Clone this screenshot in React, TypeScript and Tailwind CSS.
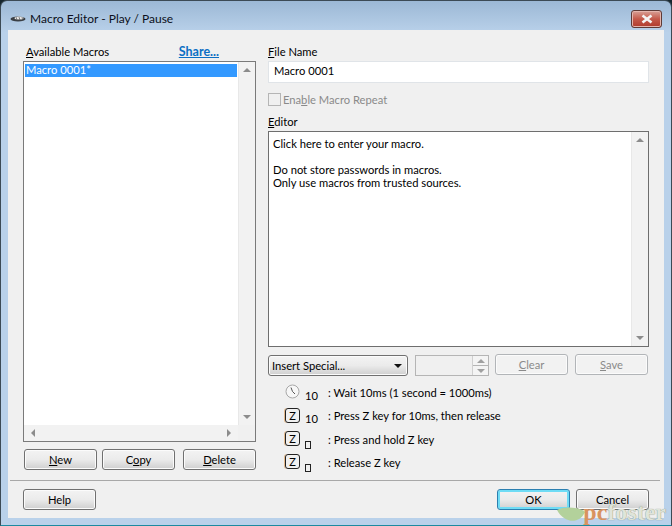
import type { ReactNode } from "react";

const btn = "flex items-center justify-center rounded-[3px] border border-[#707070] bg-gradient-to-b from-[#f3f3f3] via-[#ebebeb] to-[#cfcfcf] shadow-[inset_0_0_0_1px_#fbfbfb] text-black";
const btnOff = "flex items-center justify-center rounded-[3px] border border-[#b2b5b8] bg-[#f2f2f2] text-[#8a8a8a] shadow-[inset_0_0_0_1px_#fbfbfb]";

function Tri({ dir, color = "#8c8c8c" }: { dir: "up" | "down" | "left" | "right"; color?: string }) {
  const pts = {
    up: "0,4 4,0 8,4",
    down: "0,0 8,0 4,4",
    left: "4,0 4,8 0,4",
    right: "0,0 4,4 0,8",
  }[dir];
  const box = dir === "up" || dir === "down" ? "0 0 8 4" : "0 0 4 8";
  const w = dir === "up" || dir === "down" ? 8 : 4;
  const h = dir === "up" || dir === "down" ? 4 : 8;
  return (
    <svg width={w} height={h} viewBox={box}>
      <polygon points={pts} fill={color} />
    </svg>
  );
}

function VScroll() {
  return (
    <div className="w-[17px] shrink-0 bg-[#f2f2f2] flex flex-col justify-between items-center py-[6px] border-l border-[#e8e8e8]">
      <Tri dir="up" />
      <Tri dir="down" />
    </div>
  );
}

function KeyIcon() {
  return (
    <div className="w-[15px] h-[15px] rounded-[3px] border border-[#222] flex items-center justify-center text-[11px] leading-none shadow-[-1px_0_0_#e4b98c]">
      Z
    </div>
  );
}

function Clock() {
  return (
    <svg width="15" height="15" viewBox="0 0 15 15" fill="none">
      <circle cx="7.5" cy="7.5" r="6.5" stroke="#a8a8a8" fill="#f7f7f7" />
      <path d="M6 3.5 L7.5 7.5 L10 10" stroke="#555" />
    </svg>
  );
}

function Tofu() {
  return <div className="w-[6px] h-[8px] border border-[#222]" />;
}

function LegendRow({ icon, sub, text, h }: { icon: ReactNode; sub: ReactNode; text: string; h: string }) {
  return (
    <div className={`flex items-center ${h}`}>
      <div className="w-[15px] ml-[17px] mb-[2px] flex justify-center">{icon}</div>
      <div className="w-[28px] pl-[5px] pt-[6px] leading-[14px]">{sub}</div>
      <div className="whitespace-nowrap">{text}</div>
    </div>
  );
}

export default function App() {
  return (
    <div className="w-[672px] h-[526px] overflow-hidden bg-[#16262e] font-['Lato',sans-serif] text-[11.2px] leading-[14px] text-black">
      <div className="relative w-full h-full flex flex-col rounded-t-[7px] border border-[#3c4a55] border-b-[#1c8aa0] bg-gradient-to-b from-[#9cb8d5] from-0% to-[#b9d1ea] to-[6%]">
        {/* Title bar */}
        <div className="h-[29px] shrink-0 flex items-center pl-[9px] pr-[9px]">
          <svg width="16" height="8" viewBox="0 0 16 8" className="mt-[7px]">
            <ellipse cx="8" cy="4" rx="7.5" ry="2.6" fill="#3a3f45" />
            <ellipse cx="9" cy="3" rx="4.5" ry="1.6" fill="#e8e8e8" />
            <path d="M6 2 L7 5 M9 2 L10 5 M12 2 L12.5 4.5" stroke="#555" strokeWidth="0.7" />
          </svg>
          <div className="ml-[4px] mt-[7px] text-[12px] text-[#0c1020]">Macro Editor - Play / Pause</div>
          <div className="ml-auto mt-[7px] w-[31px] h-[18px] rounded-[3px] border border-[#5e3a36] bg-gradient-to-b from-[#d7a097] via-[#c4594a] to-[#b03a2c] flex items-center justify-center shadow-[inset_0_0_0_1px_#e4b5ad]">
            <svg width="14" height="10" viewBox="0 0 14 10">
              <path d="M2.5 1.5 L11.5 8.5 M11.5 1.5 L2.5 8.5" stroke="#f4f4f4" strokeWidth="2.6" />
            </svg>
          </div>
        </div>

        {/* Dialog body */}
        <div className="flex-1 mx-[7px] mb-[7px] bg-[#f0f0f0] flex flex-col min-h-0">
          <div className="h-[450px] shrink-0 flex gap-[12px] pl-[15px] pr-[15px] pt-[15px]">
            {/* Available macros */}
            <div className="w-[233px] shrink-0 flex flex-col">
              <div className="h-[16px] flex justify-between pl-[3px] pr-[37px]">
                <span><u>A</u>vailable Macros</span>
                <span className="font-bold text-[12.5px] text-[#0b6fc4] underline">Share...</span>
              </div>
              <div className="h-[381px] border border-[#7a7a7a] bg-white flex flex-col">
                <div className="flex-1 flex min-h-0">
                  <div className="flex-1 p-[1px]">
                    <div className="h-[13px] mt-[1px] bg-[#3399ff] text-white pl-[1px] leading-[12px]">Macro 0001*</div>
                  </div>
                  <VScroll />
                </div>
                <div className="h-[16px] shrink-0 flex">
                  <div className="flex-1 bg-[#f2f2f2] flex justify-between items-center px-[7px]">
                    <Tri dir="left" />
                    <Tri dir="right" />
                  </div>
                  <div className="w-[17px] bg-[#f0f0f0]" />
                </div>
              </div>
              <div className="mt-[7px] h-[21px] flex pl-[1px]">
                <div className={`${btn} w-[73px]`}><span><u>N</u>ew</span></div>
                <div className={`${btn} w-[73px] ml-[5px]`}><span>C<u>o</u>py</span></div>
                <div className={`${btn} w-[73px] ml-[8px]`}><span><u>D</u>elete</span></div>
              </div>
            </div>

            {/* Editor side */}
            <div className="w-[381px] shrink-0 flex flex-col">
              <div className="h-[16px]"><u>F</u>ile Name</div>
              <div className="h-[22px] border border-[#e0e4e8] bg-white pl-[5px] pb-[2px] flex items-center">Macro 0001</div>
              <div className="mt-[10px] h-[13px] flex items-center">
                <div className="w-[13px] h-[13px] border border-[#b5b5b5] bg-[#f0f0f0]" />
                <span className="ml-[2px] text-[#8a8a8a]">Ena<u>b</u>le Macro Repeat</span>
              </div>
              <div className="mt-[9px] h-[16px]"><u>E</u>ditor</div>
              <div className="h-[216px] border border-[#6e6e6e] bg-white flex">
                <div className="flex-1 pl-[4px] pt-[5px] leading-[13px]">
                  <div>Click here to enter your macro.</div>
                  <div className="mt-[13px]">Do not store passwords in macros.</div>
                  <div>Only use macros from trusted sources.</div>
                </div>
                <VScroll />
              </div>
              <div className="mt-[7px] h-[22px] flex">
                <div className={`${btn} w-[140px] h-[21px] mt-[1px] justify-between! pl-[3px] pr-[5px]`}>
                  <span>Insert Special...</span>
                  <Tri dir="down" color="#111" />
                </div>
                <div className="w-[74px] h-[21px] mt-[1px] ml-[7px] border border-[#b5b5b5] bg-[#f0f0f0] flex justify-end">
                  <div className="w-[16px] flex flex-col border-l border-[#d0d0d0]">
                    <div className="flex-1 flex items-center justify-center border-b border-[#b5b5b5] bg-[#f4f4f4]"><Tri dir="up" color="#a0a0a0" /></div>
                    <div className="flex-1 flex items-center justify-center bg-[#f4f4f4]"><Tri dir="down" color="#a0a0a0" /></div>
                  </div>
                </div>
                <div className={`${btnOff} w-[73px] h-[21px] ml-[6px]`}><span><u>C</u>lear</span></div>
                <div className={`${btnOff} w-[73px] h-[21px] ml-[7px]`}><span><u>S</u>ave</span></div>
              </div>
              <div className="mt-[5px] flex flex-col">
                <LegendRow h="h-[23px]" icon={<Clock />} sub="10" text=": Wait 10ms (1 second = 1000ms)" />
                <LegendRow h="h-[24px]" icon={<KeyIcon />} sub="10" text=": Press Z key for 10ms, then release" />
                <LegendRow h="h-[23px]" icon={<KeyIcon />} sub={<div className="mt-[4px]"><Tofu /></div>} text=": Press and hold Z key" />
                <LegendRow h="h-[23px]" icon={<KeyIcon />} sub={<div className="mt-[4px]"><Tofu /></div>} text=": Release Z key" />
              </div>
            </div>
          </div>

          {/* Footer */}
          <div className="mx-[2px] mr-[4px] border-t border-[#a8a8a8]" />
          <div className="flex-1 flex items-start pl-[15px] pr-[15px] pt-[8px]">
            <div className={`${btn} w-[73px] h-[21px]`}>Help</div>
            <div className={`${btn} w-[73px] h-[21px] ml-auto border-[#2c7fb0]! shadow-[inset_0_0_0_2px_#6fdcf5]!`}>OK</div>
            <div className={`${btn} w-[73px] h-[21px] ml-[6px]`}>Cancel</div>
          </div>
        </div>

        {/* Watermark */}
        <div className="absolute right-[5px] bottom-[1px] flex items-end pointer-events-none">
          <svg width="28" height="17" viewBox="0 0 28 17" className="mr-[-2px] mb-[1px]">
            <path d="M0 4 C9 -1 25 2 28 6 C22 19 7 17 0 4 Z" fill="#b3d19b" />
          </svg>
          <span className="font-['Liberation_Serif',serif] font-bold text-[24px] leading-[24px]">
            <span className="text-[#d9935f]">pc</span>
            <span className="text-[#dfe4da] [text-shadow:0_0_1px_#6f7a68]">foster</span>
          </span>
        </div>
      </div>
    </div>
  );
}
